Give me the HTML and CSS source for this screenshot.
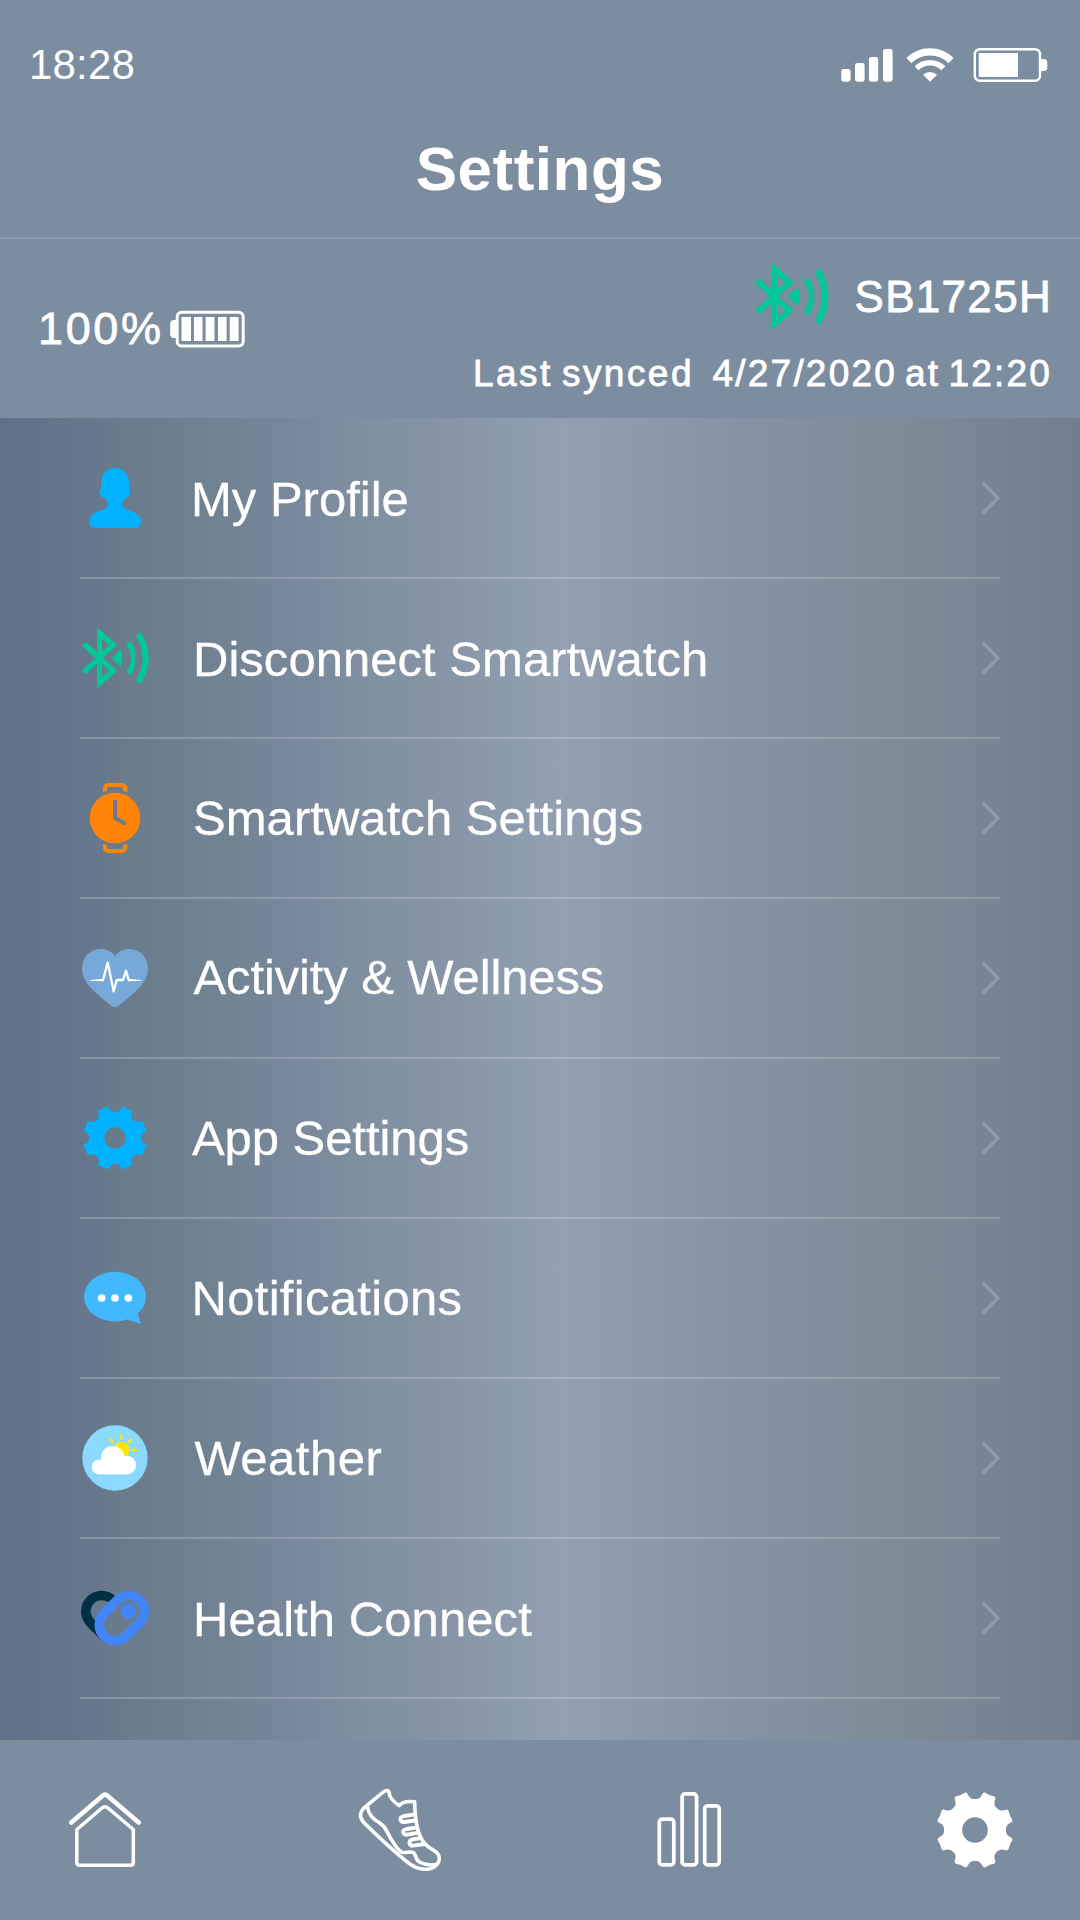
FILE: index.html
```html
<!DOCTYPE html>
<html lang="en">
<head>
<meta charset="utf-8">
<title>Settings</title>
<link rel="stylesheet" href="styles.css">
</head>
<body>
<svg class="defs" aria-hidden="true">
  <symbol id="bluetooth" viewBox="60 549 210 210">
    <path fill-rule="evenodd" d="M111 562L172 615L128 654L172 692L111 746V671L77 703L65 691L106 654L65 617L77 605L111 636ZM126 597V634L148 616ZM126 673V711L148 692Z"/>
    <path d="M155 654L182 628Q192 654 182 680Z"/>
    <path d="M212 602Q242 654 212 707L198 694Q228 654 198 614Z"/>
    <path d="M242 576Q290 654 242 733L228 721Q267 654 228 588Z"/>
  </symbol>
  <symbol id="gear" viewBox="-105 -105 210 210">
    <circle r="54.5" fill="none" stroke="currentColor" stroke-width="45"/>
    <g fill="currentColor">
      <path id="tooth" d="M-25-55L-38-86L-28-92Q-21-96-18-89C-14-80-8-77 0-77C8-77 14-80 18-89Q21-96 28-92L38-86L25-55Z"/>
      <use href="#tooth" transform="rotate(45)"/>
      <use href="#tooth" transform="rotate(90)"/>
      <use href="#tooth" transform="rotate(135)"/>
      <use href="#tooth" transform="rotate(180)"/>
      <use href="#tooth" transform="rotate(225)"/>
      <use href="#tooth" transform="rotate(270)"/>
      <use href="#tooth" transform="rotate(315)"/>
    </g>
  </symbol>
  <symbol id="chevron" viewBox="0 0 20 36"><path d="M3.6 3.3L18 18L3.6 32.7" fill="none" stroke="#8f9eaa" stroke-width="3.2" stroke-linecap="round" stroke-linejoin="round"/></symbol>
</svg>

<header class="header">
  <div class="status">
    <span class="time">18:28</span>
    <div class="status-icons">
      <svg width="52" height="40" viewBox="0 0 52 40" fill="#fff">
        <rect x=".3" y="24" width="9.3" height="12.7" rx="2.4"/><rect x="14" y="18" width="9.6" height="18.7" rx="2.4"/><rect x="27.9" y="12" width="9.3" height="24.7" rx="2.4"/><rect x="42" y="4" width="9.6" height="32.7" rx="2.4"/>
      </svg>
      <svg class="wifi" width="48" height="40" viewBox="0 0 48 40">
        <g fill="none" stroke="#fff"><path stroke-width="7.2" d="M2.9 15.6A29.8 29.8 0 0 1 45.1 15.6"/><path stroke-width="5.6" d="M10.6 23.3A19 19 0 0 1 37.4 23.3"/></g>
        <path fill="#fff" d="M24 36.7L17 29.7A10.4 10.4 0 0 1 31 29.7Z"/>
      </svg>
      <svg class="phone-battery" width="75" height="40" viewBox="0 0 75 40">
        <rect x="1.8" y="4.2" width="65.2" height="31.6" rx="5" fill="none" stroke="#fff" stroke-width="2.4"/>
        <path fill="#fff" d="M5.7 8H45V32H5.7ZM68 14H71Q74.3 14 74.3 18V22Q74.3 26 71 26H68Z"/>
      </svg>
    </div>
  </div>
  <h1 class="title">Settings</h1>
</header>

<section class="device">
  <div class="charge">
    <span class="percent">100%</span>
    <svg width="76" height="40" viewBox="0 0 76 40">
      <rect x="7.2" y="3.3" width="66" height="33.6" rx="4.5" fill="none" stroke="#fff" stroke-width="3"/>
      <path fill="#fff" d="M7 11H4Q.2 11 .2 15V25Q.2 29 4 29H7ZM11.5 8H21V32H11.5ZM24 8H32.5V32H24ZM35.6 8H44.5V32H35.6ZM48 8H56.6V32H48ZM59.7 8H68.6V32H59.7Z"/>
    </svg>
  </div>
  <div class="sync">
    <div class="model"><svg class="model-icon"><use href="#bluetooth"/></svg><span>SB1725H</span></div>
    <div class="synced"><span class="synced-label">Last synced&nbsp; </span>4/27/2020 at 12:20</div>
  </div>
</section>

<main class="menu">
  <div class="row">
    <svg class="icon" viewBox="60 69 210 210"><path fill="#00b2ff" d="M165 84C142 84 123 101 123 130V147C119 149 118 155 120 161C122 168 127 173 134 173C137 179 144 184 145 192C145 204 131 208 116 214C99 220 88 229 88 243C88 256 93 263 103 263H228C238 263 243 256 243 243C243 229 231 220 214 214C199 208 187 204 186 192C187 184 193 179 196 173C203 173 208 168 210 161C212 155 211 149 207 147V130C207 101 188 84 165 84Z"/></svg>
    <span class="label profile low">My Profile</span><svg class="chevron"><use href="#chevron"/></svg>
  </div>
  <div class="row">
    <svg class="icon green"><use href="#bluetooth"/></svg>
    <span class="label disconnect low">Disconnect Smartwatch</span><svg class="chevron"><use href="#chevron"/></svg>
  </div>
  <div class="row">
    <svg class="icon" viewBox="60 69 210 210">
      <mask id="hands"><rect x="60" y="69" width="210" height="210" fill="#fff"/><path d="M165 125V174L194 190" fill="none" stroke="#000" stroke-width="12" stroke-linecap="round" stroke-linejoin="round"/></mask>
      <g fill="#ff8408"><circle cx="165" cy="174" r="76" mask="url(#hands)"/>
      <path d="M129 97V86Q129 69 147 69H184Q202 69 202 86V97L189 92V86Q189 81 184 81H146Q141 81 141 86V92ZM129 251V262Q129 279 147 279H184Q202 279 202 262V251L189 256V262Q189 267 184 267H146Q141 267 141 262V256Z"/></g>
    </svg>
    <span class="label watch">Smartwatch Settings</span><svg class="chevron"><use href="#chevron"/></svg>
  </div>
  <div class="row">
    <svg class="icon" viewBox="60 549 210 210">
      <path fill="#76a9d8" d="M165 588C175 575 190 567 208 567C240 567 264 592 264 626C264 665 231 693 176 737Q165 745 154 737C99 693 66 665 66 626C66 592 90 567 122 567C140 567 155 575 165 588Z"/>
      <path fill="none" stroke="#fff" stroke-width="7" stroke-linejoin="round" d="M129 660L143 608L161 694L170 660H189L198 632L206 660"/>
      <path fill="#fff" d="M91 660L132 656.5V663.5L91 662ZM204 656.5L244 660V662L204 663.5Z"/>
    </svg>
    <span class="label activity">Activity &amp; Wellness</span><svg class="chevron"><use href="#chevron"/></svg>
  </div>
  <div class="row">
    <svg class="icon blue"><use href="#gear"/></svg>
    <span class="label app">App Settings</span><svg class="chevron"><use href="#chevron"/></svg>
  </div>
  <div class="row">
    <svg class="icon" viewBox="60 549 210 210">
      <g fill="#42b8ff"><ellipse cx="165" cy="650" rx="93" ry="74.5"/><path d="M196 710L203 719L243 732L233 700L240 690Z"/></g>
      <g fill="#fff"><circle cx="125" cy="654" r="11.5"/><circle cx="165" cy="654" r="11.5"/><circle cx="205" cy="654" r="11.5"/></g>
    </svg>
    <span class="label notify">Notifications</span><svg class="chevron"><use href="#chevron"/></svg>
  </div>
  <div class="row">
    <svg class="icon" viewBox="60 69 210 210">
      <circle cx="165" cy="174" r="98" fill="#8cd9ff"/><circle cx="184" cy="150" r="25" fill="#ffe600"/>
      <path d="M183 105V116M151 117L158 126M214 118L207 127M218 150H228" stroke="#ffe600" stroke-width="7" stroke-linecap="round"/>
      <g fill="#fff"><circle cx="117" cy="201" r="22"/><circle cx="158" cy="173" r="35"/><circle cx="200" cy="195" r="28"/><path d="M117 185H200V223H117Z"/></g>
    </svg>
    <span class="label weather">Weather</span><svg class="chevron"><use href="#chevron"/></svg>
  </div>
  <div class="row">
    <svg class="icon" viewBox="60 549 210 210">
      <path d="M158.6 600.4A47.5 47.5 0 1 0 91.4 667.6L111 687" fill="none" stroke="#003044" stroke-width="29"/><path fill="#003044" d="M81 678L122 719L128 712L112 660Z"/>
      <rect x="-75.8" y="-47.5" width="151.6" height="95" rx="47.5" transform="translate(185.5 654)rotate(-45)" fill="none" stroke="#4285f8" stroke-width="29"/>
      <circle cx="205" cy="634" r="23.5" fill="#4285f8"/>
    </svg>
    <span class="label health low">Health Connect</span><svg class="chevron"><use href="#chevron"/></svg>
  </div>
</main>

<nav class="tabs">
  <svg width="80" height="80" viewBox="0 0 80 80" fill="none" stroke="#fff" stroke-linecap="round" stroke-linejoin="round">
    <path stroke-width="4.6" d="M6.3 32.6L38.2 5.3Q40 3.8 41.8 5.3L73.8 32.6"/>
    <path stroke-width="3.5" d="M14.5 75.3H65.6Q68.3 75.3 68.3 72.6V39.5L43 18Q40 15.5 37 18L11.8 39.5V72.6Q11.8 75.3 14.5 75.3Z"/>
  </svg>
  <svg width="90" height="87" viewBox="1030 170 261 261" preserveAspectRatio="none" fill="none" stroke="#fff" stroke-width="10.5" stroke-linejoin="round">
    <path d="M1064 226L1112 185Q1127 175 1129 188Q1130 206 1158 226Q1168 211 1203 214C1204 290 1216 322 1234 341C1250 360 1263 358 1272 373C1281 396 1262 416 1238 417C1215 418 1196 408 1180 394C1140 360 1090 312 1054 275C1042 260 1042 243 1064 226Z"/>
    <path d="M1066 228C1068 252 1085 268 1102 278C1125 294 1120 305 1137 330C1150 352 1160 362 1166 366C1180 368 1190 362 1200 367C1210 378 1204 391 1220 397C1235 404 1255 405 1270 401"/>
    <path stroke-width="11.5" d="M1204 252L1172 257Q1161 260 1162 267Q1163 276 1173 275L1207 270M1211 291L1180 296Q1168 299 1170 306Q1172 314 1180 313L1216 307M1222 323L1197 327Q1187 330 1188 339Q1190 347 1198 346L1234 341"/>
  </svg>
  <svg width="70" height="80" viewBox="0 0 70 80" fill="none" stroke="#fff" stroke-width="3.7">
    <rect x="4.3" y="29.2" width="14.5" height="45.7" rx="3"/><rect x="27.1" y="3.9" width="14.5" height="71" rx="3"/><rect x="49.7" y="15.8" width="14.5" height="59.1" rx="3"/>
  </svg>
  <svg class="tab-gear"><use href="#gear"/></svg>
</nav>
</body>
</html>
```
FILE: styles.css
```css
* { box-sizing: border-box; }

body {
  margin: 0;
  width: 1080px;
  height: 1920px;
  overflow: hidden;
  background: #7b8d9e;
  color: #fff;
  font-family: "Liberation Sans", Arial, sans-serif;
}

svg { display: block; flex: none; }
.defs { position: absolute; width: 0; height: 0; }

.header { height: 239px; border-bottom: 2px solid #8c9bac; }

.status {
  height: 130px;
  padding: 0 32px 0 29px;
  display: flex;
  align-items: center;
  justify-content: space-between;
}
.time { font-size: 42px; letter-spacing: 0.2px; }
.status-icons { display: flex; }
.wifi { margin-left: 13px; }
.phone-battery { margin-left: 19px; }

.title {
  margin: 0;
  height: 78px;
  line-height: 78px;
  text-align: center;
  font-size: 62px;
  font-weight: 700;
  letter-spacing: 0.5px;
}

.device {
  height: 179px;
  padding: 0 28px 0 38px;
  display: flex;
  justify-content: space-between;
  -webkit-text-stroke: 0.8px #fff;
}
.charge { display: flex; align-items: center; gap: 6.4px; }
.percent { font-size: 45px; letter-spacing: 2.6px; }
.sync { padding-top: 19px; }
.model {
  height: 77px;
  display: flex;
  align-items: center;
  justify-content: flex-end;
  gap: 25px;
  font-size: 44px;
  letter-spacing: 1.3px;
}
.model-icon { width: 77px; height: 77px; fill: #00c896; }
.synced {
  line-height: 77px;
  font-size: 37px;
  text-align: right;
  letter-spacing: 2.2px;
  word-spacing: -4.4px;
  white-space: nowrap;
}
.synced-label { letter-spacing: 2.45px; word-spacing: -3.4px; }

.menu {
  height: 1322px;
  padding: 1px 80px 0;
  background: linear-gradient(90deg, #617089 0, #67778d 98px, #697a8a 108px, #6c7e8d 150px, #738495 240px, #7a899c 310px, #8090a0 365px, #8694a5 440px, #8e9dae 520px, #92a0b2 560px, #8592a3 750px, #7f8d99 870px, #7b8794 960px, #727e8b 1080px);
}
.row {
  height: 160px;
  display: flex;
  align-items: center;
  border-bottom: 2px solid rgba(255, 255, 255, 0.2);
}
.icon { width: 70px; height: 70px; }
.green { fill: #00c896; }
.blue { color: #00b2ff; }
.label {
  flex: 1;
  font-size: 49px;
  white-space: nowrap;
  -webkit-text-stroke: 0.3px #fff;
}
.low { padding-top: 2px; }
.profile { margin-left: 41px; }
.disconnect { margin-left: 43px; letter-spacing: 0.03px; }
.watch { margin-left: 43px; letter-spacing: 0.05px; }
.activity { margin-left: 43.5px; padding-bottom: 2px; letter-spacing: -0.12px; }
.app { margin-left: 42px; letter-spacing: -0.06px; }
.notify { margin-left: 41.5px; letter-spacing: 0.3px; }
.weather { margin-left: 44.5px; letter-spacing: 0.5px; }
.health { margin-left: 43px; letter-spacing: 0.08px; }
.chevron { width: 20px; height: 36px; }

.tabs {
  height: 180px;
  padding-left: 65px;
  display: grid;
  grid-template-columns: 289.7px 300.3px 277.6px 84px;
  align-items: center;
  background: #7b8d9e;
}
.tab-gear { width: 84px; height: 84px; color: #fff; }
```
